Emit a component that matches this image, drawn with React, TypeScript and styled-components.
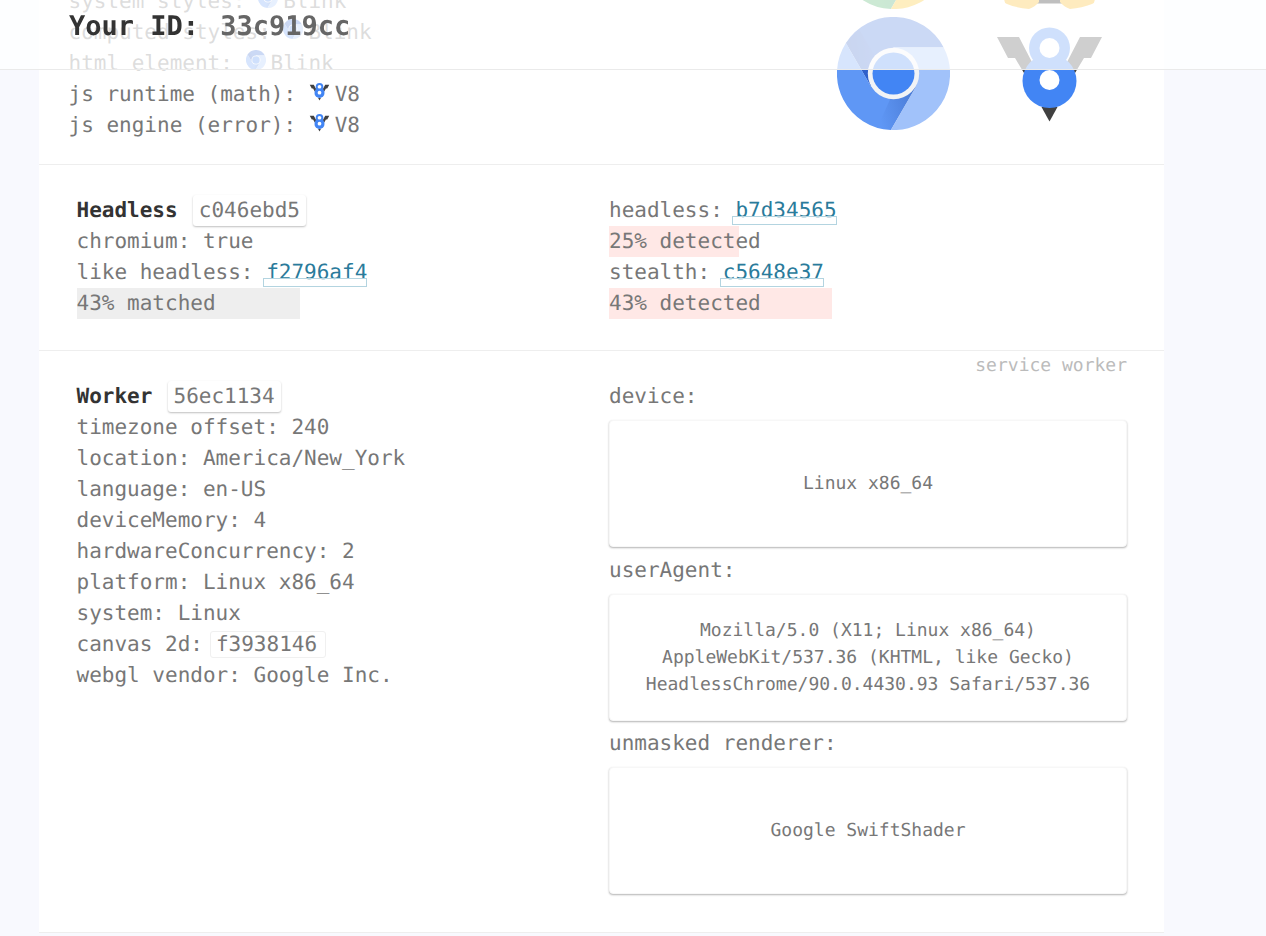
import * as React from 'react';
import styled, { createGlobalStyle } from 'styled-components';

const GlobalStyle = createGlobalStyle`
  html, body {
    margin: 0;
    padding: 0;
    height: 100%;
    overflow: hidden;
    background: #f8f9fe;
  }
  body {
    font-family: "DejaVu Sans Mono", "Liberation Mono", monospace;
    font-size: 21px;
    line-height: 31px;
    color: #777;
    text-rendering: geometricPrecision;
  }
`;

type ChromeProps = { size?: number, top?: string, left?: string, right?: string };

const ChromeLogo = ({ size = 113, top = '#3367d6', left = '#5f97f5', right = '#a1c2fa' }: ChromeProps) => (
  <LogoSvg viewBox="0 0 113 113" width={size} height={size} $small={size < 50}>
    <defs>
      <linearGradient id="wedgeLeft" x1="1" y1="0.2" x2="0" y2="0.5">
        <stop offset="0" stopColor="#1a3a8c" stopOpacity="0.3" />
        <stop offset="1" stopColor="#1a3a8c" stopOpacity="0" />
      </linearGradient>
      <linearGradient id="wedgeTop" x1="0" y1="0.6" x2="1" y2="0.4">
        <stop offset="0" stopColor="#1a3a8c" stopOpacity="0.3" />
        <stop offset="1" stopColor="#1a3a8c" stopOpacity="0" />
      </linearGradient>
    </defs>
    <path d="M56.5 30.5 L106.7 30.5 A56.5 56.5 0 0 0 8.9 26 L34 69.5 Z" fill={top} />
    <path d="M34 69.5 L8.9 26 A56.5 56.5 0 0 0 53.9 113 L79 69.5 Z" fill={left} />
    <path d="M79 69.5 L53.9 113 A56.5 56.5 0 0 0 106.7 30.5 L56.5 30.5 Z" fill={right} />
    <path d="M79 69.5 L53.9 113 L40 111 L56 76 Z" fill="url(#wedgeLeft)" />
    <path d="M34 69.5 L8.9 26 L22 12 L44 50 Z" fill="url(#wedgeTop)" />
    <circle cx="56.5" cy="56.5" r="25.7" fill="#f1f3f6" />
    <circle cx="56.5" cy="56.5" r="21" fill="#4285f4" />
  </LogoSvg>
);

const V8Logo = ({ size = 113 }: { size?: number }) => (
  <LogoSvg viewBox="0 0 113 113" width={size} height={size} $small={size < 50}>
    <path d="M4 20 L26 20 L41 49 L31 56 L22 41 L15 41 Z" fill="#404040" />
    <path d="M109 20 L87 20 L72 49 L82 56 L91 41 L98 41 Z" fill="#404040" />
    <path d="M48.5 90 L64.5 90 L56.5 104.500 Z" fill="#404040" />
    <circle cx="56.5" cy="31" r="20.500" fill="#4285f4" />
    <circle cx="56.5" cy="64" r="27" fill="#4285f4" />
    <circle cx="56.5" cy="31" r="10" fill="#fff" />
    <circle cx="56.5" cy="63" r="10" fill="#fff" />
  </LogoSvg>
);

const GoldLogo = () => (
  <LogoSvg viewBox="0 0 113 113" width={113} height={113} $small={false}>
    <path d="M42 70 L72 70 L72 107.500 L42 107.500 Z" fill="#000" />
    <path d="M12 70 L46 70 L46 106 Q42 111 36 113 Q24 112 14 108 Q10 106 12 102 Z" fill="#f9b000" />
    <path d="M101 70 L67 70 L67 106 Q71 111 77 113 Q89 112 99 108 Q103 106 101 102 Z" fill="#f9b000" />
  </LogoSvg>
);

type HashProps = { $kind: 'raised' | 'outline' | 'link' };

const Blink = () => (
  <>
    <ChromeLogo size={20} />Blink
  </>
);

const V8 = () => (
  <>
    <V8Logo size={21} />V8
  </>
);

const App = () => {
  return (
    <>
      <GlobalStyle />
      <TopBar>
        <strong>Your ID:</strong> <TopHash>33c919cc</TopHash>
      </TopBar>
      <Page>
        <EngineSection>
          <EngineLines>
            <div>system styles: <Blink /></div>
            <div>computed styles: <Blink /></div>
            <div>html element: <Blink /></div>
            <div>js runtime (math): <V8 /></div>
            <div>js engine (error): <V8 /></div>
          </EngineLines>
          <LogoGrid>
            <ChromeLogo top="#ea4335" left="#34a853" right="#fbbc05" />
            <GoldLogo />
            <ChromeLogo />
            <V8Logo />
          </LogoGrid>
        </EngineSection>

        <Section>
          <Column>
            <div><Title>Headless</Title> <Hash $kind="raised">c046ebd5</Hash></div>
            <div>chromium: true</div>
            <div>like headless: <Hash $kind="link">f2796af4</Hash></div>
            <Bar $percent={43} $color="#eeeeee">43% matched</Bar>
          </Column>
          <Column>
            <div>headless: <Hash $kind="link">b7d34565</Hash></div>
            <Bar $percent={25} $color="#ffe8e6">25% detected</Bar>
            <div>stealth: <Hash $kind="link">c5648e37</Hash></div>
            <Bar $percent={43} $color="#ffe8e6">43% detected</Bar>
          </Column>
        </Section>

        <WorkerSection>
          <Note>service worker</Note>
          <Column>
            <div><Title>Worker</Title> <Hash $kind="raised">56ec1134</Hash></div>
            <div>timezone offset: 240</div>
            <div>location: America/New_York</div>
            <div>language: en-US</div>
            <div>deviceMemory: 4</div>
            <div>hardwareConcurrency: 2</div>
            <div>platform: Linux x86_64</div>
            <div>system: Linux</div>
            <div>canvas 2d:<Hash $kind="outline">f3938146</Hash></div>
            <div>webgl vendor: Google Inc.</div>
          </Column>
          <Column>
            <div>device:</div>
            <Card>Linux x86_64</Card>
            <div>userAgent:</div>
            <Card>Mozilla/5.0 (X11; Linux x86_64) AppleWebKit/537.36 (KHTML, like Gecko) HeadlessChrome/90.0.4430.93 Safari/537.36</Card>
            <div>unmasked renderer:</div>
            <Card>Google SwiftShader</Card>
          </Column>
        </WorkerSection>
      </Page>
    </>
  );
};

export default App;

const TopBar = styled.header`
  position: fixed;
  z-index: 2;
  top: 0;
  left: 0;
  right: 0;
  height: 58px;
  padding: 11px 0 0 69px;
  background: rgba(255, 255, 255, 0.75);
  border-bottom: 1px solid #eaeaea;
  font-size: 27px;
  line-height: 31px;
  white-space: pre;

  strong {
    color: #333;
    font-weight: 700;
  }
`;

const TopHash = styled.span`
  padding-left: 5px;
  color: #666;
  font-weight: 700;
`;

const Page = styled.main`
  width: 1125px;
  margin: -104px 0 0 39px;
  background: #fff;
`;

const LogoSvg = styled.svg<{ $small: boolean }>`
  display: ${props => (props.$small ? 'inline-block' : 'block')};
  ${props => props.$small && `
    vertical-align: top;
    margin: 2px 5px 0 0;
  `}
`;

const EngineSection = styled.section`
  display: flex;
  justify-content: space-between;
  align-items: flex-end;
  padding: 0 58px 23.5px 29.5px;
  border-bottom: 1px solid #eee;
`;

const EngineLines = styled.div`
  white-space: nowrap;
`;

const LogoGrid = styled.div`
  display: grid;
  grid-template-columns: 113px 113px;
  column-gap: 43px;
  row-gap: 8px;
  margin-bottom: 10.5px;
`;

const Section = styled.section`
  position: relative;
  display: grid;
  grid-template-columns: 518px 518px;
  column-gap: 14.5px;
  padding: 30px 37px 31px 37.5px;
  border-bottom: 1px solid #eee;
`;

const WorkerSection = styled(Section)`
  padding-bottom: 30.5px;
`;

const Column = styled.div`
  min-width: 0;
`;

const Title = styled.strong`
  color: #333;
  font-weight: 700;
`;

const Hash = styled.span<HashProps>`
  position: relative;
  display: inline-block;
  ${props => props.$kind === 'raised' && `
    margin-left: 2.5px;
    padding: 0 6px;
    border-radius: 3px;
    box-shadow: 0 1px 2px rgba(0, 0, 0, 0.25);
  `}
  ${props => props.$kind === 'outline' && `
    margin-left: 7px;
    padding: 0 8px 0 5px;
    height: 25px;
    line-height: 25px;
    border: 1px solid #f0f0f0;
    border-radius: 3px;
  `}
  ${props => props.$kind === 'link' && `
    color: #2a7b9b;
    &::after {
      content: '';
      position: absolute;
      left: -3px;
      right: 0;
      bottom: 1px;
      height: 7px;
      border: 1px solid #b3d4e0;
    }
  `}
`;

const Bar = styled.div<{ $percent: number, $color: string }>`
  background: linear-gradient(90deg, ${props => props.$color} ${props => props.$percent}%, transparent 0);
`;

const Note = styled.div`
  position: absolute;
  top: 1px;
  right: 37px;
  font-size: 18px;
  line-height: 27px;
  color: #bbb;
`;

const Card = styled.div`
  display: flex;
  align-items: center;
  justify-content: center;
  box-sizing: border-box;
  height: 127px;
  margin: 8px 0 7.5px;
  padding: 0 20px;
  background: #fff;
  border: 1px solid #f7f7f7;
  border-radius: 4px;
  box-shadow: 0 1px 2px rgba(0, 0, 0, 0.3);
  font-size: 18px;
  line-height: 27px;
  text-align: center;
`;
